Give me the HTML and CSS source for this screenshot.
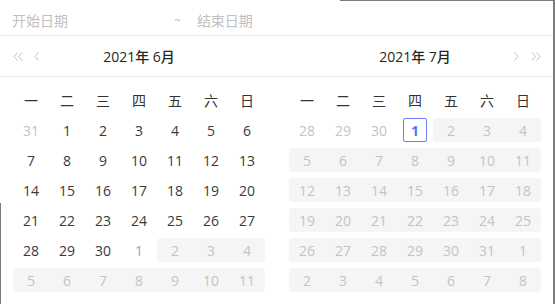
FILE: index.html
```html
<!DOCTYPE html>
<html lang="zh-CN">
<head>
  <meta charset="UTF-8" />
  <meta name="viewport" content="width=device-width, initial-scale=1" />
  <title>日期范围选择</title>
  <link rel="stylesheet" href="styles.css">
</head>
<body>
  <div class="stage">
    <div class="picker">
      <div class="range-input">
        <span class="placeholder start">开始日期</span>
        <span class="sep">~</span>
        <span class="placeholder">结束日期</span>
      </div>

      <div class="panels">
        <div class="panel">
          <div class="panel-header">
            <div class="nav">
              <svg width="10" height="9" viewBox="0 0 10 9"><path d="M4.5 0.5 L1 4.5 L4.5 8.5 M9 0.5 L5.5 4.5 L9 8.5" fill="none" stroke="#bfbfbf" stroke-width="1"/></svg>
              <svg class="single" width="6" height="9" viewBox="0 0 6 9"><path d="M4.5 0.5 L1 4.5 L4.5 8.5" fill="none" stroke="#bfbfbf" stroke-width="1"/></svg>
            </div>
            <div class="title">2021年 6月</div>
            <div class="nav"></div>
          </div>
          <div class="panel-body">
            <div class="grid">
              <div class="wd">一</div><div class="wd">二</div><div class="wd">三</div><div class="wd">四</div><div class="wd">五</div><div class="wd">六</div><div class="wd">日</div>

              <div class="cell out"><div class="in">31</div></div>
              <div class="cell"><div class="in">1</div></div>
              <div class="cell"><div class="in">2</div></div>
              <div class="cell"><div class="in">3</div></div>
              <div class="cell"><div class="in">4</div></div>
              <div class="cell"><div class="in">5</div></div>
              <div class="cell"><div class="in">6</div></div>

              <div class="cell"><div class="in">7</div></div>
              <div class="cell"><div class="in">8</div></div>
              <div class="cell"><div class="in">9</div></div>
              <div class="cell"><div class="in">10</div></div>
              <div class="cell"><div class="in">11</div></div>
              <div class="cell"><div class="in">12</div></div>
              <div class="cell"><div class="in">13</div></div>

              <div class="cell"><div class="in">14</div></div>
              <div class="cell"><div class="in">15</div></div>
              <div class="cell"><div class="in">16</div></div>
              <div class="cell"><div class="in">17</div></div>
              <div class="cell"><div class="in">18</div></div>
              <div class="cell"><div class="in">19</div></div>
              <div class="cell"><div class="in">20</div></div>

              <div class="cell"><div class="in">21</div></div>
              <div class="cell"><div class="in">22</div></div>
              <div class="cell"><div class="in">23</div></div>
              <div class="cell"><div class="in">24</div></div>
              <div class="cell"><div class="in">25</div></div>
              <div class="cell"><div class="in">26</div></div>
              <div class="cell"><div class="in">27</div></div>

              <div class="cell"><div class="in">28</div></div>
              <div class="cell"><div class="in">29</div></div>
              <div class="cell"><div class="in">30</div></div>
              <div class="cell next"><div class="in">1</div></div>
              <div class="cell band first"><div class="in">2</div></div>
              <div class="cell band"><div class="in">3</div></div>
              <div class="cell band last"><div class="in">4</div></div>

              <div class="cell band first"><div class="in">5</div></div>
              <div class="cell band"><div class="in">6</div></div>
              <div class="cell band"><div class="in">7</div></div>
              <div class="cell band"><div class="in">8</div></div>
              <div class="cell band"><div class="in">9</div></div>
              <div class="cell band"><div class="in">10</div></div>
              <div class="cell band last"><div class="in">11</div></div>
            </div>
          </div>
        </div>

        <div class="panel">
          <div class="panel-header">
            <div class="nav"></div>
            <div class="title">2021年 7月</div>
            <div class="nav right">
              <svg class="single" width="6" height="9" viewBox="0 0 6 9"><path d="M1.5 0.5 L5 4.5 L1.5 8.5" fill="none" stroke="#bfbfbf" stroke-width="1"/></svg>
              <svg width="10" height="9" viewBox="0 0 10 9"><path d="M1 0.5 L4.5 4.5 L1 8.5 M5.5 0.5 L9 4.5 L5.5 8.5" fill="none" stroke="#bfbfbf" stroke-width="1"/></svg>
            </div>
          </div>
          <div class="panel-body">
            <div class="grid">
              <div class="wd">一</div><div class="wd">二</div><div class="wd">三</div><div class="wd">四</div><div class="wd">五</div><div class="wd">六</div><div class="wd">日</div>

              <div class="cell out"><div class="in">28</div></div>
              <div class="cell out"><div class="in">29</div></div>
              <div class="cell out"><div class="in">30</div></div>
              <div class="cell today"><div class="in">1</div></div>
              <div class="cell band first"><div class="in">2</div></div>
              <div class="cell band"><div class="in">3</div></div>
              <div class="cell band last"><div class="in">4</div></div>

              <div class="cell band first"><div class="in">5</div></div>
              <div class="cell band"><div class="in">6</div></div>
              <div class="cell band"><div class="in">7</div></div>
              <div class="cell band"><div class="in">8</div></div>
              <div class="cell band"><div class="in">9</div></div>
              <div class="cell band"><div class="in">10</div></div>
              <div class="cell band last"><div class="in">11</div></div>

              <div class="cell band first"><div class="in">12</div></div>
              <div class="cell band"><div class="in">13</div></div>
              <div class="cell band"><div class="in">14</div></div>
              <div class="cell band"><div class="in">15</div></div>
              <div class="cell band"><div class="in">16</div></div>
              <div class="cell band"><div class="in">17</div></div>
              <div class="cell band last"><div class="in">18</div></div>

              <div class="cell band first"><div class="in">19</div></div>
              <div class="cell band"><div class="in">20</div></div>
              <div class="cell band"><div class="in">21</div></div>
              <div class="cell band"><div class="in">22</div></div>
              <div class="cell band"><div class="in">23</div></div>
              <div class="cell band"><div class="in">24</div></div>
              <div class="cell band last"><div class="in">25</div></div>

              <div class="cell band first"><div class="in">26</div></div>
              <div class="cell band"><div class="in">27</div></div>
              <div class="cell band"><div class="in">28</div></div>
              <div class="cell band"><div class="in">29</div></div>
              <div class="cell band"><div class="in">30</div></div>
              <div class="cell band"><div class="in">31</div></div>
              <div class="cell band last"><div class="in">1</div></div>

              <div class="cell band first"><div class="in">2</div></div>
              <div class="cell band"><div class="in">3</div></div>
              <div class="cell band"><div class="in">4</div></div>
              <div class="cell band"><div class="in">5</div></div>
              <div class="cell band"><div class="in">6</div></div>
              <div class="cell band"><div class="in">7</div></div>
              <div class="cell band last"><div class="in">8</div></div>
            </div>
          </div>
        </div>
      </div>
    </div>

    <div class="edge edge-top"></div>
    <div class="edge edge-right"></div>
    <div class="edge edge-left"></div>
  </div>
</body>
</html>
```

FILE: styles.css
```css
body {
  margin: 0;
  background: #fff;
  font-family: "Open Sans", "Noto Sans CJK SC", sans-serif;
  font-size: 14px;
  color: #3a3a3a;
}

.stage {
  position: relative;
  width: 555px;
  height: 304px;
  overflow: hidden;
}

.picker {
  width: 552px;
  margin-left: 1px;
  background: #fff;
}

.range-input {
  height: 36px;
  border-bottom: 1px solid #ebebeb;
  display: flex;
  align-items: center;
  padding: 5px 0 0 11px;
  box-sizing: border-box;
  color: #c0c0c0;
}

.placeholder {
  width: 56px;
}

.sep {
  margin-left: 106px;
  margin-right: 16px;
  font-size: 12px;
}

.panels {
  display: flex;
}

.panel {
  width: 276px;
}

.panel-header {
  height: 40px;
  border-bottom: 1px solid #ebebeb;
  display: flex;
  align-items: center;
  padding: 0 12px;
}

.nav {
  width: 40px;
  display: flex;
  align-items: center;
  gap: 11px;
}

.nav.right {
  justify-content: flex-end;
  gap: 12px;
}

.nav svg {
  display: block;
}

.title {
  flex: 1;
  text-align: center;
  font-weight: 500;
  color: #262626;
}

.panel-body {
  padding: 8px 12px;
}

.grid {
  display: grid;
  grid-template-columns: repeat(7, 36px);
  grid-auto-rows: 30px;
}

.wd {
  display: flex;
  align-items: center;
  justify-content: center;
  color: #333;
}

.cell {
  display: flex;
  align-items: center;
  justify-content: center;
}

.cell .in {
  height: 24px;
  width: 100%;
  display: flex;
  align-items: center;
  justify-content: center;
  box-sizing: border-box;
}

.cell.out {
  color: #c4c4c4;
}

.cell.next {
  color: #a6a6a6;
}

.cell.band {
  color: #c4c4c4;
}

.cell.band .in {
  background: #f5f5f5;
}

.cell.band.first .in {
  border-radius: 4px 0 0 4px;
}

.cell.band.last .in {
  border-radius: 0 4px 4px 0;
}

.cell.today .in {
  width: 24px;
  border: 1px solid #6b7ff8;
  border-radius: 2px;
  color: #5b70f5;
  font-weight: 700;
}

.edge {
  position: absolute;
  background: #7c7c7c;
}

.edge-top {
  top: 0;
  left: 340px;
  right: 0;
  height: 1px;
}

.edge-right {
  top: 0;
  right: 0;
  bottom: 0;
  width: 2px;
}

.edge-left {
  top: 203px;
  left: 0;
  bottom: 0;
  width: 1px;
}
```
